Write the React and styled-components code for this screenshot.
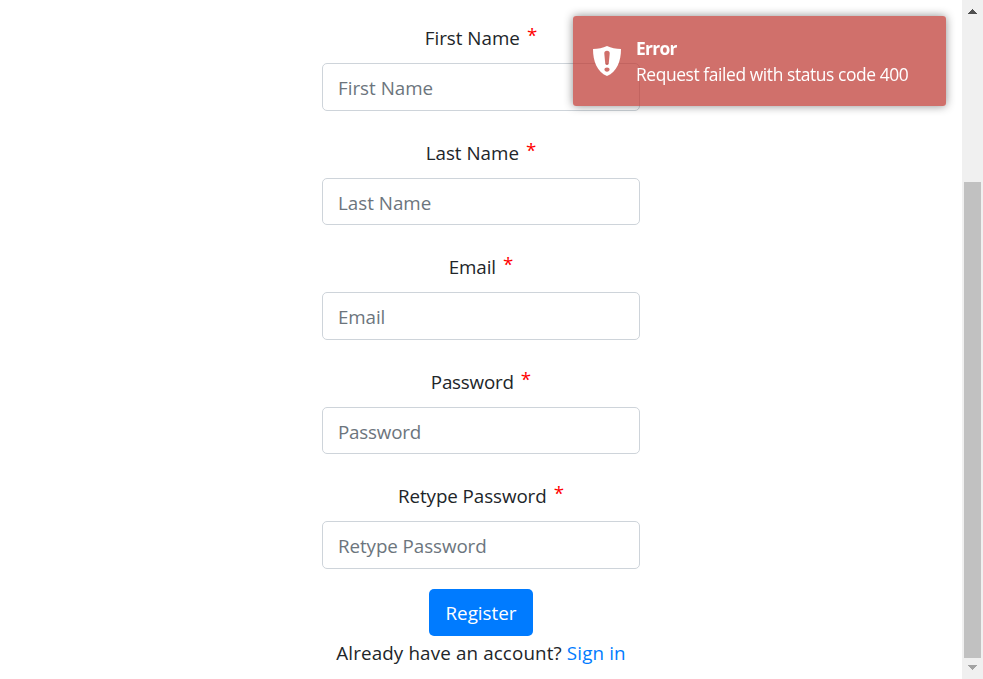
import React from "react";
import styled, { createGlobalStyle } from "styled-components";

const Global = createGlobalStyle`
  *, *::before, *::after { box-sizing: border-box; }
  body {
    margin: 0;
    overflow: hidden;
    background: #fff;
    color: #212529;
    font: 18.8px/30px "Segoe UI", "Open Sans", "Noto Sans", sans-serif;
  }
`;

const Page = styled.div`
  display: flex;
  height: 679px;
`;

const Content = styled.main`
  flex: 1;
  display: flex;
  flex-direction: column;
  align-items: center;
  padding-top: 16px;
`;

const Form = styled.form`
  width: 318px;
  display: flex;
  flex-direction: column;
  align-items: center;
`;

const Field = styled.div`
  width: 100%;
  height: 114.5px;
`;

const Label = styled.label`
  display: flex;
  justify-content: center;
  height: 47px;
  padding-top: 7px;
  letter-spacing: ${(p) => p.$spacing}px;
  white-space: nowrap;
`;

const Required = styled.span`
  margin: -3px 0 0 7px;
  color: #f00;
  letter-spacing: 0;
`;

const Input = styled.input`
  display: block;
  width: 100%;
  height: 47.5px;
  padding: 9.5px 15px 6.5px;
  border: 1px solid #ced4da;
  border-radius: 5px;
  background: #fff;
  font: inherit;
  letter-spacing: ${(p) => p.$spacing}px;
  &::placeholder { color: #6c757d; opacity: 1; }
`;

const Button = styled.button`
  width: 104px;
  height: 47px;
  padding: 2px 0 0;
  border: 0;
  border-radius: 5px;
  background: #007bff;
  color: #fff;
  font: inherit;
`;

const Prompt = styled.p`
  margin: 2px 0 0;
  letter-spacing: 0.14px;
  white-space: nowrap;
`;

const Link = styled.a`
  color: #007bff;
  text-decoration: none;
`;

const Toast = styled.div`
  position: fixed;
  top: 16px;
  left: 573px;
  width: 373px;
  height: 90px;
  display: flex;
  padding: 19px 0 0 20px;
  gap: 15px;
  border-radius: 3px;
  background: rgba(189, 54, 47, 0.71);
  box-shadow: 0 0 10px rgba(0, 0, 0, 0.45);
  color: #fff;
`;

const Shield = styled.svg`
  width: 28px;
  height: 30px;
  margin-top: 11px;
`;

const ToastText = styled.div`
  font-size: 17.4px;
  line-height: 26px;
  letter-spacing: -0.4px;
  white-space: nowrap;
`;

const ToastTitle = styled.div`
  font-weight: 700;
  letter-spacing: -0.7px;
`;

const Scrollbar = styled.div`
  width: 21px;
  display: flex;
  flex-direction: column;
  align-items: center;
  background: #f0f0f0;
`;

const Thumb = styled.div`
  width: 17px;
  height: 476px;
  margin: 168px 0 7px;
  background: #c1c1c1;
`;

const Arrow = styled.svg`
  width: 9px;
  height: 5px;
  flex: none;
  margin-top: ${(p) => p.$top}px;
`;

const fields = [
  { name: "First Name", spacing: 0 },
  { name: "Last Name", spacing: 0 },
  { name: "Email", spacing: -0.1 },
  { name: "Password", spacing: -0.2 },
  { name: "Retype Password", spacing: -0.08 },
];

export default function App() {
  return (
    <>
      <Global />
      <Page>
        <Content>
          <Form>
            {fields.map(({ name, spacing }) => (
              <Field key={name}>
                <Label $spacing={spacing}>
                  <span>{name}</span>
                  <Required>*</Required>
                </Label>
                <Input placeholder={name} $spacing={spacing} />
              </Field>
            ))}
            <Button type="button">Register</Button>
            <Prompt>
              Already have an account? <Link href="#">Sign in</Link>
            </Prompt>
          </Form>
        </Content>
        <Scrollbar>
          <Arrow $top={9} viewBox="0 0 9 5" shapeRendering="crispEdges">
            <path d="M0 5L4.5 0L9 5Z" fill="#505050" />
          </Arrow>
          <Thumb />
          <Arrow $top={0} viewBox="0 0 9 5" shapeRendering="crispEdges">
            <path d="M0 0L4.5 5L9 0Z" fill="#a3a3a3" />
          </Arrow>
        </Scrollbar>
      </Page>
      <Toast role="alert">
        <Shield viewBox="0 0 28 30">
          <path
            fillRule="evenodd"
            fill="#fff"
            d="M14 0C10 2 5 3 0 3C0 15 4 26 14 30C24 26 28 15 28 3C23 3 18 2 14 0ZM14 4.8C15.8 4.8 16.8 5.8 16.7 7.5L15.8 17C15.7 18.4 15 19 14 19C13 19 12.3 18.4 12.2 17L11.3 7.5C11.2 5.8 12.2 4.8 14 4.8ZM14 21.5C15.5 21.5 16.6 22.4 16.6 23.6C16.6 24.8 15.5 25.7 14 25.7C12.5 25.7 11.4 24.8 11.4 23.6C11.4 22.4 12.5 21.5 14 21.5Z"
          />
        </Shield>
        <ToastText>
          <ToastTitle>Error</ToastTitle>
          <div>Request failed with status code 400</div>
        </ToastText>
      </Toast>
    </>
  );
}
